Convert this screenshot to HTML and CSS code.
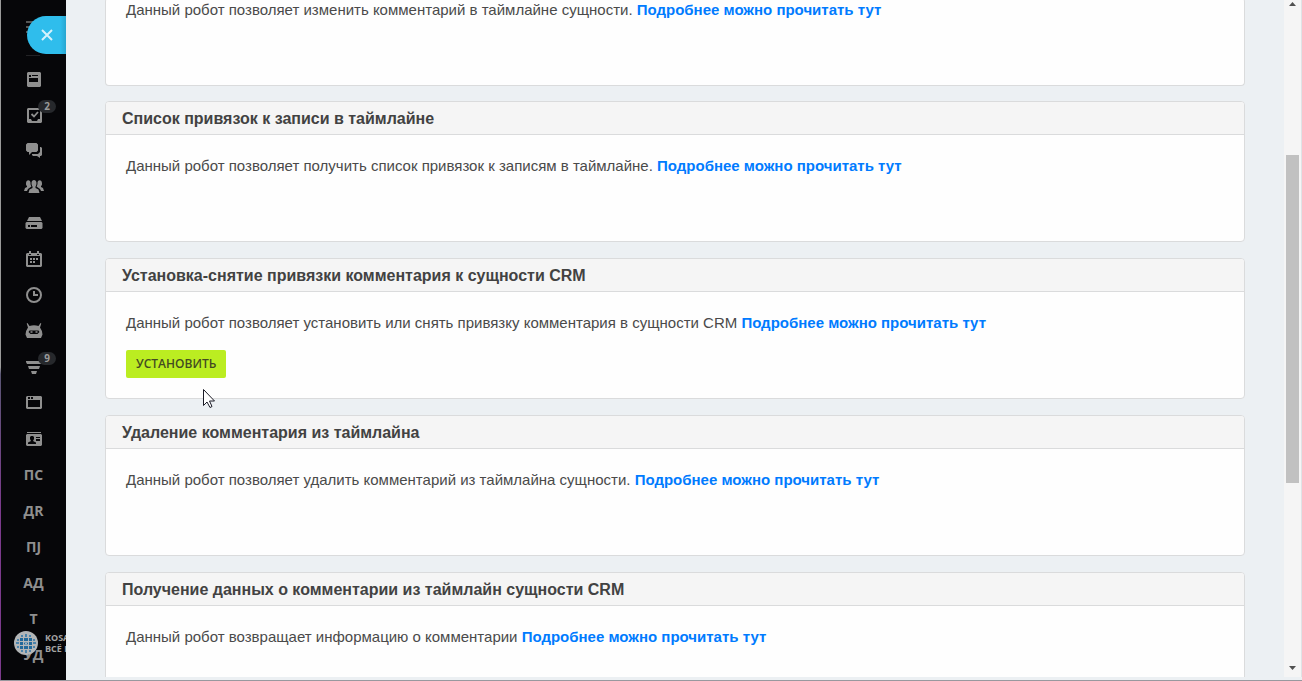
FILE: index.html
```html
<!DOCTYPE html>
<html lang="ru">
<head>
<meta charset="utf-8">
<title>Роботы</title>
<link rel="stylesheet" href="styles.css">
</head>
<body>
<div class="app">
  <aside class="sidebar">
    <div class="sidebar-top">
      <svg class="burger" width="16" height="13" viewBox="0 0 16 13"><path d="M0 1h16M0 6h16M0 11h16" stroke="currentColor" stroke-width="2"/></svg>
    </div>
    <nav class="menu">
      <a class="item" href="#" aria-label="Лента"><svg width="14" height="15" viewBox="0 0 14 15"><path fill="currentColor" fill-rule="evenodd" d="M1 0h12l1 1v13l-1 1H1l-1-1V1zM2 3v2h2V3zM5 3v1h6V3zM2 6v4h9V6z"/></svg></a>
      <a class="item" href="#" aria-label="Задачи"><svg width="16" height="16" viewBox="0 0 16 16"><path fill="currentColor" fill-rule="evenodd" d="M2 1h13l1 1v13l-1 1H2l-1-1V2zM3 3v9h2l1 2h5l1-2h2V3z"/><path d="M5.500 7l2.500 2.500L12 5" fill="none" stroke="currentColor" stroke-width="1.800"/></svg><span class="badge">2</span></a>
      <a class="item" href="#" aria-label="Чат"><svg width="16" height="16" viewBox="0 0 16 16"><path fill="currentColor" d="M1.500 0h9L12 1.500v6L10.500 9H6l-3 3V9H1.500L0 7.500v-6zM14 4h1l1 1v7l-1 1h-1v2l-3-2H7l-1-1v-1h6l2-2z"/></svg></a>
      <a class="item" href="#" aria-label="Группы"><svg width="20" height="16" viewBox="0 0 20 16"><g fill="currentColor"><path d="M7.500 4c0-4 5-4 5 0 0 2-.5 3-1 3.500V9l3 1.500 1 3.500H4.500l1-3.500 3-1.500V7.500C8 7 7.500 6 7.500 4z"/><path d="M2 4.500c0-4 4-4 4.500-1C6.300 5.500 7 7 7.500 7.500L4 10l-1 2H0l1-3 2-1V7C2 6.500 2 5.500 2 4.500zM18 4.500c0-4-4-4-4.500-1 .2 2-.5 3.500-1 4L16 10l1 2h3l-1-3-2-1V7c1-.5 1-1.500 1-2.500z"/></g></svg></a>
      <a class="item" href="#" aria-label="Диск"><svg width="18" height="14" viewBox="0 0 18 14"><path fill="currentColor" fill-rule="evenodd" d="M4 1h11l2 4H2zM1.500 6h15l1 1v5l-1 1h-15l-1-1V7zM3 9v2h2V9zM6 9v2h6V9z"/></svg></a>
      <a class="item" href="#" aria-label="Календарь"><svg width="16" height="16" viewBox="0 0 16 16"><path fill="currentColor" fill-rule="evenodd" d="M1 2h2v2h2V2h6v2h2V2h2l1 1v12l-1 1H1l-1-1V3zM2 5v9h12V5z"/><path stroke="currentColor" stroke-width="2" d="M4 0v3M12 0v3M7 8h2M10 8h2M4 8h2M4 11h2M7 11h2"/></svg></a>
      <a class="item" href="#" aria-label="Время"><svg width="16" height="16" viewBox="0 0 16 16"><circle cx="8" cy="8" r="7" fill="none" stroke="currentColor" stroke-width="2"/><path d="M8 4v4h4" fill="none" stroke="currentColor" stroke-width="2"/></svg></a>
      <a class="item" href="#" aria-label="Роботы"><svg width="18" height="16" viewBox="0 0 18 16"><path fill="currentColor" fill-rule="evenodd" d="M2.500 0l2 3Q9 1.500 13.500 3l2-3 .8.600L15 4.500q2 2.500 2.500 7L16 15H2L.5 11.500Q1 7 3 4.500L1.700.6zM4.500 7.500L3.500 9l2 2h7l2-2-1-1.500z"/><path d="M5.500 9h2M10.500 9h2" stroke="currentColor" stroke-width="1.500"/></svg></a>
      <a class="item" href="#" aria-label="CRM"><svg width="16" height="14" viewBox="0 0 16 14"><path fill="currentColor" d="M0 1h16v1l-1 2H1L0 2zM2 6h12l-1 3H3zM5 11h6l-1 3H6z"/></svg><span class="badge">9</span></a>
      <a class="item" href="#" aria-label="Сайты"><svg width="16" height="14" viewBox="0 0 16 14"><path fill="currentColor" fill-rule="evenodd" d="M1 0h14l1 1v11l-1 1H1l-1-1V1zM2 1v2h2V1zM5 1v2h2V1zM2 4v7h12V4z"/></svg></a>
      <a class="item" href="#" aria-label="Контакты"><svg width="16" height="14" viewBox="0 0 16 14"><path fill="currentColor" fill-rule="evenodd" d="M1 0h14v1H1zM1 2h14l1 1v10l-1 1H1l-1-1V3zM4 5v2l1 2-3 1.500V12h8v-1.500L7 9l1-2V5L7 4H5zM10 5v1h4V5zM10 7v2h4V7z"/></svg></a>
      <a class="item" href="#">ПС</a>
      <a class="item" href="#">ДR</a>
      <a class="item" href="#">ПJ</a>
      <a class="item" href="#">АД</a>
      <a class="item" href="#">Т</a>
      <a class="item" href="#">УД</a>
    </nav>
    <div class="brand">
      <svg width="24" height="24" viewBox="0 0 24 24">
        <circle cx="12" cy="12" r="12" fill="#b2b5b7"/>
        <path fill="#22699b" d="M6 7h3v3H6zM10 7h4v3h-4zM15 7h3v3h-3zM6 11h3v3H6zM15 11h3v3h-3zM6 15h3v3H6zM10 15h4v3h-4zM15 15h3v3h-3zM10 11h4v3h-4z"/>
        <path fill="#4b83ab" d="M7 4h2v2H7zM11 3h2v3h-2zM15 4h2v2h-2zM7 19h2v2H7zM11 19h2v3h-2zM15 19h2v2h-2zM3 8h2v2H3zM2 11h3v2H2zM3 15h2v2H3zM19 8h2v2h-2zM19 11h3v2h-3zM19 15h2v2h-2z"/>
        <path d="M10 10.500l4 4M14 10.500l-4 4" stroke="#c9cdcf"/>
      </svg>
      <div class="brand-text">KOSA<br>ВСЁ П</div>
    </div>
    <button class="close" type="button" aria-label="Закрыть"><svg width="12" height="12" viewBox="0 0 12 12"><path d="M1 1l10 10M11 1L1 11" stroke="#d5f2fc" stroke-width="2"/></svg></button>
  </aside>
  <main class="content">
    <div class="list">
      <section class="card">
        <div class="card-body card-body-cut"><p>Данный робот позволяет изменить комментарий в таймлайне сущности. <a href="#">Подробнее можно прочитать тут</a></p></div>
      </section>
      <section class="card">
        <h2>Список привязок к записи в таймлайне</h2>
        <div class="card-body"><p>Данный робот позволяет получить список привязок к записям в таймлайне. <a href="#">Подробнее можно прочитать тут</a></p></div>
      </section>
      <section class="card">
        <h2>Установка-снятие привязки комментария к сущности CRM</h2>
        <div class="card-body"><p>Данный робот позволяет установить или снять привязку комментария в сущности CRM <a href="#">Подробнее можно прочитать тут</a></p><button class="install" type="button">УСТАНОВИТЬ</button></div>
      </section>
      <section class="card">
        <h2>Удаление комментария из таймлайна</h2>
        <div class="card-body"><p>Данный робот позволяет удалить комментарий из таймлайна сущности. <a href="#">Подробнее можно прочитать тут</a></p></div>
      </section>
      <section class="card">
        <h2>Получение данных о комментарии из таймлайн сущности CRM</h2>
        <div class="card-body"><p>Данный робот возвращает информацию о комментарии <a href="#">Подробнее можно прочитать тут</a></p></div>
      </section>
    </div>
  </main>
  <div class="scrollbar">
    <svg width="7" height="4" viewBox="0 0 7 4"><path fill="#505050" d="M0 4L3.500 0 7 4z"/></svg>
    <div class="track"><div class="thumb"></div></div>
    <svg width="7" height="4" viewBox="0 0 7 4"><path fill="#505050" d="M0 0h7L3.500 4z"/></svg>
  </div>
</div>
<svg class="cursor" width="13" height="20" viewBox="0 0 13 20"><path d="M.5 1.500v16l3.500-3.500 3 5.500 2-1-2.500-5.500h5z" fill="#fff" stroke="#1b1b26"/></svg>
</body>
</html>
```
FILE: styles.css
```css
* { box-sizing: border-box; }
body {
  margin: 0;
  height: 100vh;
  overflow: hidden;
  background: #ecf0f3;
  border-bottom: 1px solid #98989e;
  font-family: "Liberation Sans", Arial, sans-serif;
  color: #4a4a4a;
}
.app { display: flex; height: 100%; }

.sidebar {
  position: relative;
  flex: none;
  width: 66px;
  overflow: hidden;
  background: linear-gradient(#9a9a9a 0 54%, #5a5674 55%, #7b3a8c 75%) 0 0 / 1px 100% no-repeat, #060609;
  color: #8f8f8f;
}
.sidebar-top {
  height: 56px;
  margin: 0 26px 5px;
  padding-top: 21px;
  width: 14px;
  border-bottom: 1px solid #222225;
}
.burger { display: block; color: #555; }
.menu { display: flex; flex-direction: column; }
.item {
  position: relative;
  display: flex;
  flex: none;
  align-items: center;
  justify-content: center;
  height: 36px;
  padding-left: 1px;
  color: inherit;
  font: 700 14px/20px "Open Sans", sans-serif;
  text-decoration: none;
}
.badge {
  position: absolute;
  top: 3px;
  left: 38px;
  width: 18px;
  height: 13px;
  border-radius: 7px;
  background: #26282c;
  color: #9a9a9a;
  font: 700 10px/13px "Open Sans", sans-serif;
  text-align: center;
}
.close {
  position: absolute;
  top: 16px;
  right: 0;
  display: flex;
  align-items: center;
  width: 39px;
  height: 38px;
  padding: 0 0 0 14px;
  border: 0;
  border-radius: 19px 0 0 19px;
  background: linear-gradient(90deg, #2fbdec 85%, #28a6d0);
}
.brand {
  position: absolute;
  top: 631px;
  left: 14px;
  display: flex;
  align-items: center;
  gap: 7px;
}
.brand svg { flex: none; }
.brand-text {
  color: #a3a3a3;
  font: 700 9px/11px "Open Sans", sans-serif;
  white-space: nowrap;
}

.content {
  flex: 1;
  min-width: 0;
  margin-bottom: 3px;
  padding: 0 39px;
  overflow: hidden;
}
.list {
  display: flex;
  flex-direction: column;
  gap: 16px;
  margin-top: -2px;
}
.card {
  border: 1px solid #dadbdc;
  border-radius: 4px;
  background: #fefefe;
  overflow: hidden;
}
.card:first-child { border-top: 0; }
.card h2 {
  margin: 0;
  padding: 2px 16px 0;
  border-bottom: 1px solid #dadbdc;
  background: #f5f5f5;
  color: #424242;
  font-size: 16px;
  line-height: 30px;
}
.card-body {
  min-height: 106px;
  padding: 20px;
}
.card-body-cut {
  min-height: 87px;
  padding-top: 1px;
}
/* The card cut off by the top edge takes one pixel from the gap below it. */
.card:first-child { margin-bottom: -1px; }
.card p {
  margin: 0 0 16px;
  font-size: 15px;
  line-height: 22px;
}
.card a {
  color: #007bff;
  font-weight: 700;
  text-decoration: none;
}
.install {
  display: block;
  height: 28px;
  padding: 0 10px;
  border: 0;
  border-radius: 2px;
  background: #bbed21;
  color: #444b22;
  font: 600 12px/28px "Open Sans", sans-serif;
}

.scrollbar {
  display: flex;
  flex: none;
  flex-direction: column;
  align-items: center;
  gap: 8px;
  width: 18px;
  margin-bottom: 3px;
  padding: 2px 0 7px;
  border-right: 1px solid #dfe3e6;
  background: #f5f5f5;
}
.track { flex: 1; width: 13px; }
.thumb {
  height: 51%;
  margin-top: 141px;
  background: #c1c1c1;
}
.cursor {
  position: absolute;
  top: 388px;
  left: 203px;
}
```
